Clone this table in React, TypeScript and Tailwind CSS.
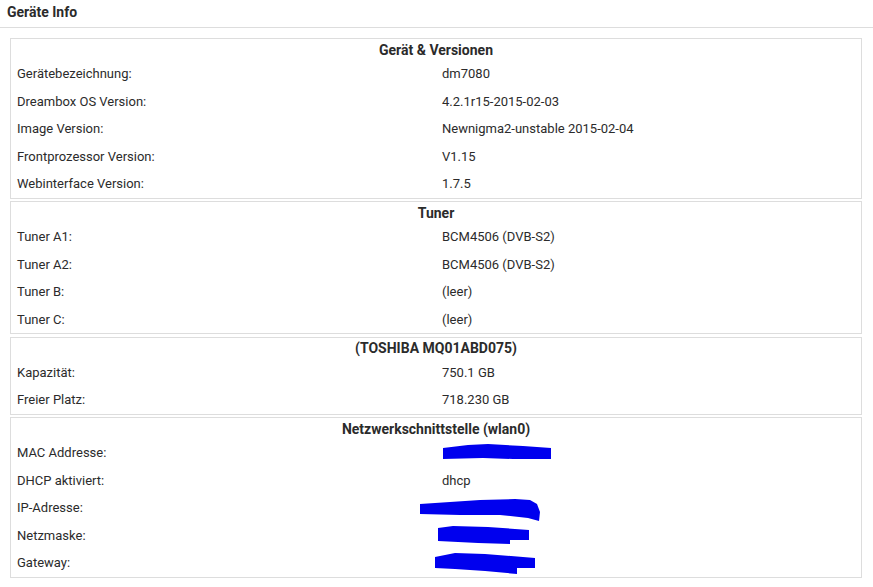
type Row = { label: string; value: string; scribble?: string };

const sections: { title: string; rows: Row[] }[] = [
  {
    title: "Gerät & Versionen",
    rows: [
      { label: "Gerätebezeichnung:", value: "dm7080" },
      { label: "Dreambox OS Version:", value: "4.2.1r15-2015-02-03" },
      { label: "Image Version:", value: "Newnigma2-unstable 2015-02-04" },
      { label: "Frontprozessor Version:", value: "V1.15" },
      { label: "Webinterface Version:", value: "1.7.5" },
    ],
  },
  {
    title: "Tuner",
    rows: [
      { label: "Tuner A1:", value: "BCM4506 (DVB-S2)" },
      { label: "Tuner A2:", value: "BCM4506 (DVB-S2)" },
      { label: "Tuner B:", value: "(leer)" },
      { label: "Tuner C:", value: "(leer)" },
    ],
  },
  {
    title: "(TOSHIBA MQ01ABD075)",
    rows: [
      { label: "Kapazität:", value: "750.1 GB" },
      { label: "Freier Platz:", value: "718.230 GB" },
    ],
  },
  {
    title: "Netzwerkschnittstelle (wlan0)",
    rows: [
      { label: "MAC Addresse:", value: "", scribble: "mac" },
      { label: "DHCP aktiviert:", value: "dhcp" },
      { label: "IP-Adresse:", value: "", scribble: "ip" },
      { label: "Netzmaske:", value: "", scribble: "mask" },
      { label: "Gateway:", value: "", scribble: "gw" },
    ],
  },
];

// blaue Übermalungen über den Adressen
function Scribble({ kind }: { kind: string }) {
  if (kind === "mac")
    return (
      <svg className="absolute left-[1px] top-[-1px]" width="108" height="16" viewBox="0 0 108 16">
        <path d="M0 4 L25 1 L45 0 L80 2 L108 4 L108 15 L70 15 L40 14 L0 15 Z" fill="#0000ee" />
      </svg>
    );
  if (kind === "ip")
    return (
      <svg className="absolute left-[-22px] top-[-1px]" width="120" height="22" viewBox="0 0 120 22">
        <path d="M0 5 L30 3 L60 1 L95 0 L110 1 L117 5 L120 13 L119 22 L108 19 L80 16 L40 16 L0 15 Z" fill="#0000ee" />
      </svg>
    );
  if (kind === "mask")
    return (
      <svg className="absolute left-[-4px] top-[-1px]" width="91" height="18" viewBox="0 0 91 18">
        <path d="M0 2 L15 0 L50 1 L91 4 L91 14 L72 14 L72 18 L40 17 L0 15 Z" fill="#0000ee" />
      </svg>
    );
  return (
    <svg className="absolute left-[-7px] top-[-2px]" width="100" height="21" viewBox="0 0 100 21">
      <path d="M0 4 L20 0 L50 1 L100 5 L100 15 L82 15 L82 21 L50 18 L20 16 L0 15 Z" fill="#0000ee" />
    </svg>
  );
}

export default function App() {
  return (
    <main className="min-h-[587px] bg-white text-[#2b2b2b] font-['Roboto',sans-serif] text-[13px]">
      {/* Titel */}
      <header className="h-[28px] border-b border-[#ddd] px-[7px] pt-[2px]">
        <h1 className="text-[14px] font-bold leading-[20px]">Geräte Info</h1>
      </header>

      <div className="flex flex-col gap-[2.5px] px-[10px] pt-[10px] w-[872px]">
        {sections.map((s) => (
          <section key={s.title} className="border border-[#ddd]">
            <div className="h-[21px] flex items-center justify-center text-[14px] font-bold pt-[1px]">{s.title}</div>
            {s.rows.map((r) => (
              <div key={r.label} className="grid grid-cols-2 h-[27.5px] items-center">
                <div className="pl-[6px]">{r.label}</div>
                <div className="pl-[6px]">
                  {r.scribble ? (
                    <div className="relative h-[16px]">
                      <Scribble kind={r.scribble} />
                    </div>
                  ) : (
                    r.value
                  )}
                </div>
              </div>
            ))}
          </section>
        ))}
      </div>
    </main>
  );
}
